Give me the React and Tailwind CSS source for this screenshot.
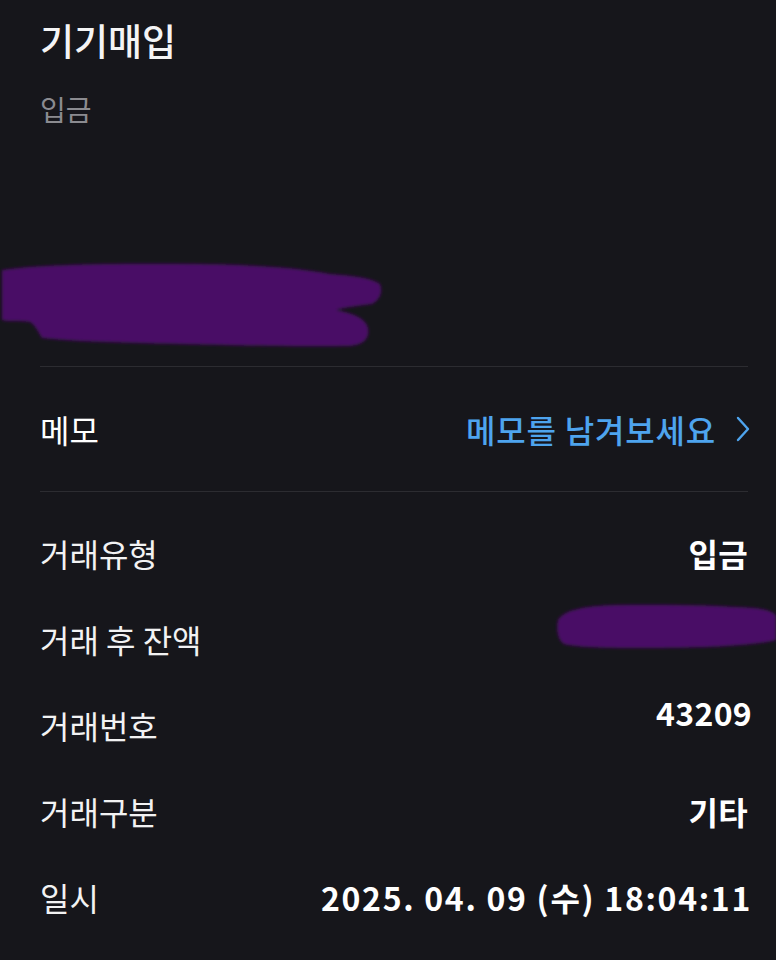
import React from 'react';

const font = { fontFamily: '"Noto Sans CJK KR", "Noto Sans", sans-serif' };

const Scribble = ({ className, d, width, height }) => (
    <svg className={className} width={width} height={height} viewBox={`0 0 ${width} ${height}`}>
        <defs>
            <filter id="soft" x="-10%" y="-20%" width="120%" height="140%">
                <feGaussianBlur stdDeviation="1.6" />
            </filter>
        </defs>
        <path d={d} fill="#4a0f66" filter="url(#soft)" />
    </svg>
);

const rows = [
    { label: '거래유형', value: '입금' },
    { label: '거래 후 잔액', value: null },
    { label: '거래번호', value: '43209', up: true },
    { label: '거래구분', value: '기타' },
    { label: '일시', value: '2025. 04. 09 (수) 18:04:11', wide: true },
];

export default function App() {
    return (
        <div className="min-h-[960px] w-[776px] overflow-hidden bg-[#16161b] text-white" style={font}>
            <div className="pl-[40px] pr-[28px]">
                <h1 className="pt-[18px] text-[37px] font-medium leading-[44px] text-[#f4f4f5]">기기매입</h1>
                <p className="mt-[29px] text-[28px] leading-[36px] text-[#8b8b90]">입금</p>

                <div className="-ml-[40px] h-[239px] pt-[133px]">
                    <Scribble
                        width={384}
                        height={96}
                        d="M2 10 C40 4 120 3 200 4 C260 5 300 8 330 14 C355 16 372 18 380 24 C383 32 380 40 372 44 C356 46 342 48 336 50 C352 53 366 58 368 68 C370 78 364 85 350 86 C300 87 220 85 140 83 C90 82 60 80 42 78 C38 72 36 66 30 62 C20 60 8 62 2 60 Z"
                    />
                </div>

                <div className="h-px bg-[#2c2c31]" />

                <div className="flex h-[124px] items-center justify-between">
                    <span className="text-[32px]">메모</span>
                    <span className="-mr-[2px] flex items-center gap-[20px] text-[32px] font-medium tracking-[0.8px] text-[#4ea4ee]">
                        메모를 남겨보세요
                        <svg width="14" height="26" viewBox="0 0 14 26" fill="none" stroke="#4ea4ee" strokeWidth="2.4" strokeLinecap="round" strokeLinejoin="round">
                            <path d="M2 2 L12 13 L2 24" />
                        </svg>
                    </span>
                </div>

                <div className="h-px bg-[#2c2c31]" />

                <div className="flex flex-col pt-[18px]">
                    {rows.map((row) => (
                        <div key={row.label} className="flex h-[86px] items-center justify-between">
                            <span className="text-[32px] text-[#f2f2f3]">{row.label}</span>
                            {row.value === null ? (
                                <Scribble
                                    className="-mr-[28px] mb-[24px]"
                                    width={222}
                                    height={54}
                                    d="M4 20 C10 10 30 6 60 5 C110 4 160 5 200 8 C212 9 220 12 222 16 L222 40 C200 46 150 48 100 48 C60 48 24 48 10 44 C4 40 2 30 4 20 Z"
                                />
                            ) : (
                                <span className={`text-[32px] font-semibold ${row.wide ? 'tracking-[1.7px] -mr-[4px]' : 'tracking-[0.3px]'} ${row.up ? '-mt-[26px] -mr-[4px]' : ''}`}>{row.value}</span>
                            )}
                        </div>
                    ))}
                </div>
            </div>
        </div>
    );
}
